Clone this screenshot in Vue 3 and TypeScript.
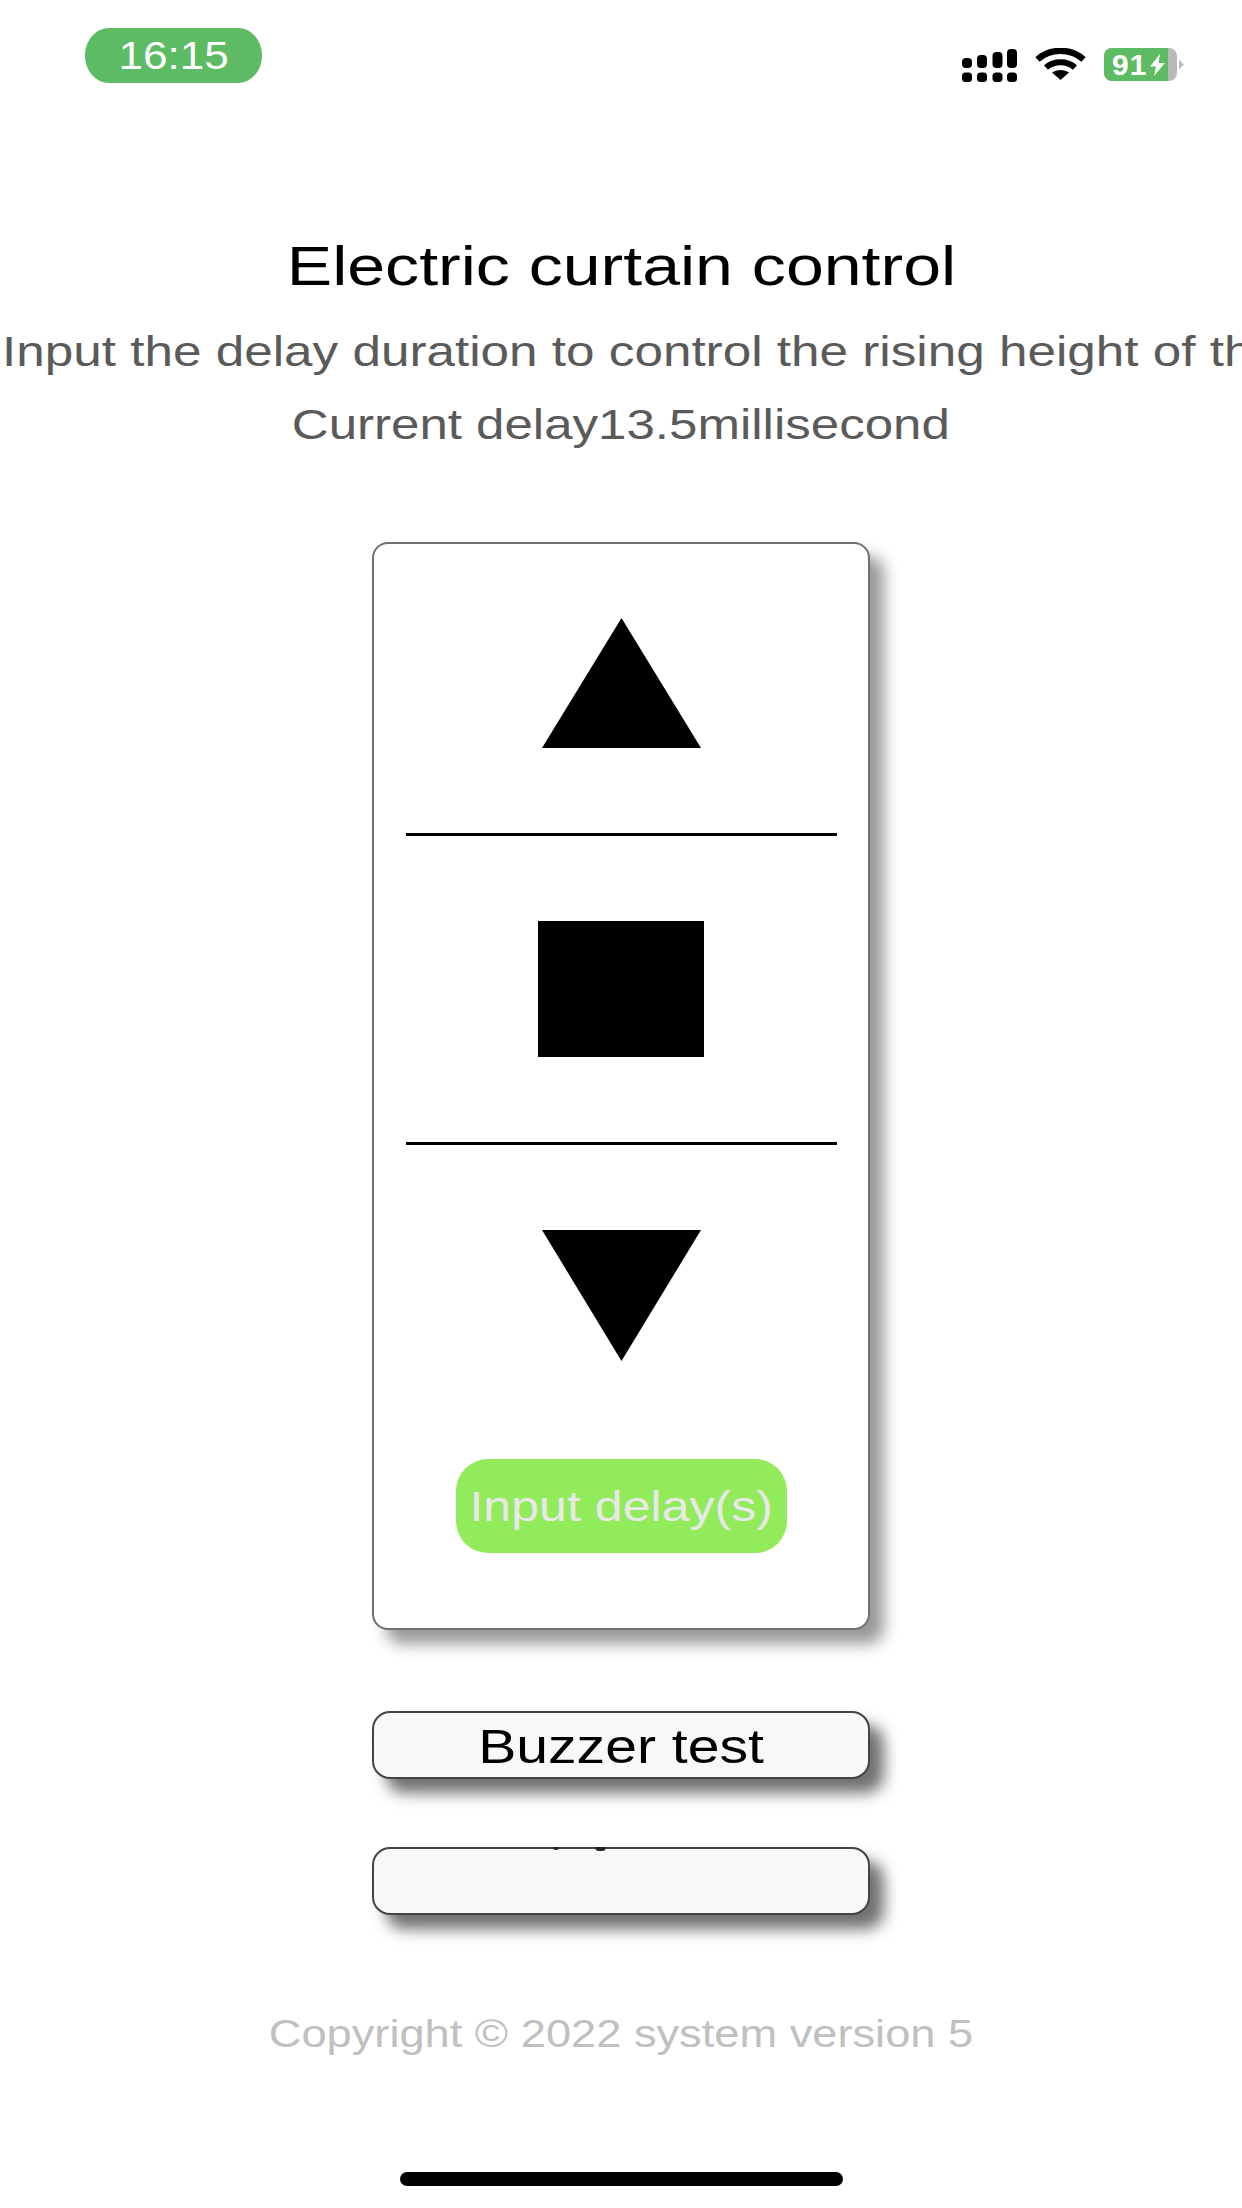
<script setup lang="ts">
const controls = [
  { name: 'up', kind: 'poly', points: '79.5,0 159,130 0,130', w: 159, h: 130 },
  { name: 'stop', kind: 'rect', points: '', w: 166, h: 136 },
  { name: 'down', kind: 'poly', points: '0,0 159,0 79.5,131', w: 159, h: 131 }
]
const signalBars = [
  { x: 0, y: 9, h: 10 },
  { x: 15, y: 6, h: 13 },
  { x: 30.5, y: 3, h: 16 },
  { x: 45, y: 0, h: 19 }
]
</script>

<template>
  <main class="page">
    <header class="status">
      <div class="time"><span class="stretch">16:15</span></div>
      <div class="icons">
        <svg class="signal" width="55" height="33" viewBox="0 0 55 33" aria-hidden="true">
          <rect v-for="b in signalBars" :key="b.x" :x="b.x" :y="b.y" width="10" :height="b.h" rx="4" fill="#000" />
          <rect v-for="b in signalBars" :key="'d' + b.x" :x="b.x" y="23.5" width="10" height="9.5" rx="3.5" fill="#000" />
        </svg>
        <svg class="wifi" width="51" height="32" viewBox="0 0 51 32" aria-hidden="true">
          <path d="M2.5 11.5 C15 0 36 0 48.5 11.5" fill="none" stroke="#000" stroke-width="6.4" />
          <path d="M11 19.5 C19 12.5 32 12.5 40 19.5" fill="none" stroke="#000" stroke-width="6" />
          <path d="M17 24.5 C22 21 29 21 34 24.5 L25.5 32 Z" fill="#000" />
        </svg>
        <div class="battery">
          <div class="cell">
            <div class="charge">
              <span class="percent">91</span>
              <svg class="bolt" width="17" height="22" viewBox="0 0 17 22" aria-hidden="true">
                <path d="M11 0 L1 12.5 H7 L5 22 L16 9 H9.5 Z" fill="#fff" />
              </svg>
            </div>
          </div>
          <span class="nub"></span>
        </div>
      </div>
    </header>

    <h1 class="title"><span class="stretch">Electric curtain control</span></h1>
    <div class="hint"><span class="stretch-left">Input the delay duration to control the rising height of the curtain</span></div>
    <p class="delay"><span class="stretch">Current delay13.5millisecond</span></p>

    <section class="card">
      <template v-for="(c, i) in controls" :key="c.name">
        <div class="control">
          <svg :width="c.w" :height="c.h" :viewBox="`0 0 ${c.w} ${c.h}`" :aria-label="c.name">
            <polygon v-if="c.kind === 'poly'" :points="c.points" fill="#000" />
            <rect v-else :width="c.w" :height="c.h" fill="#000" />
          </svg>
        </div>
        <hr v-if="i < controls.length - 1" class="rule" />
      </template>
      <button class="input-btn" type="button"><span class="stretch">Input delay(s)</span></button>
    </section>

    <button class="wide-btn buzzer" type="button"><span class="stretch">Buzzer test</span></button>
    <button class="wide-btn blank" type="button">
      <i class="mark mark-a"></i>
      <i class="mark mark-b"></i>
    </button>

    <footer class="copy"><span class="stretch">Copyright © 2022 system version 5</span></footer>
    <div class="home"></div>
  </main>
</template>

<style>
html, body { margin: 0; background: #fff; }
</style>

<style scoped>
.page {
  width: 1242px;
  height: 2208px;
  box-sizing: border-box;
  padding-top: 28px;
  display: flex;
  flex-direction: column;
  align-items: center;
  overflow: hidden;
  background: #fff;
  font-family: "Liberation Sans", Arial, sans-serif;
}
.stretch {
  display: inline-block;
  transform: scaleX(var(--sx));
  white-space: nowrap;
}
.stretch-left {
  display: inline-block;
  transform: scaleX(1.22);
  transform-origin: left center;
  white-space: nowrap;
}
.status {
  width: 1242px;
  height: 55px;
  padding: 0 58px 0 85px;
  box-sizing: border-box;
  display: flex;
  justify-content: space-between;
  align-items: flex-start;
}
.time {
  --sx: 1.16;
  width: 177px;
  height: 55px;
  border-radius: 24px / 27px;
  background: #5dbb63;
  color: #fff;
  font-size: 38px;
  line-height: 57px;
  text-align: center;
}
.icons {
  display: flex;
  align-items: flex-start;
  margin-top: 20px;
}
.signal { margin-top: 1px; }
.wifi { margin-left: 18px; }
.battery {
  margin-left: 18px;
  display: flex;
  align-items: center;
}
.cell {
  width: 73px;
  height: 33px;
  border-radius: 8px;
  background: #b9bbb9;
  overflow: hidden;
}
.charge {
  width: 64px;
  height: 33px;
  background: #5dbb63;
  display: flex;
  align-items: center;
  padding-left: 8px;
  box-sizing: border-box;
}
.percent {
  color: #fff;
  font-weight: 700;
  font-size: 30px;
  line-height: 33px;
  letter-spacing: 1px;
}
.bolt { flex: none; margin-left: 2px; }
.nub {
  margin-left: 2px;
  width: 5px;
  height: 10px;
  background: #bdbdbd;
  clip-path: polygon(0 0, 100% 50%, 0 100%);
}
.title {
  --sx: 1.215;
  margin: 153px 0 0;
  height: 60px;
  font-size: 56px;
  line-height: 60px;
  font-weight: 400;
  color: #000;
  text-align: center;
}
.hint {
  width: 1242px;
  height: 60px;
  margin-top: 26px;
  padding-left: 2px;
  box-sizing: border-box;
  overflow: hidden;
  font-size: 42px;
  line-height: 60px;
  color: #5a5a5a;
  white-space: nowrap;
}
.delay {
  --sx: 1.215;
  margin: 13px 0 0;
  height: 60px;
  font-size: 42px;
  line-height: 60px;
  color: #5a5a5a;
  text-align: center;
}
.card {
  width: 498px;
  height: 1088px;
  margin-top: 87px;
  box-sizing: border-box;
  border: 2px solid #707070;
  border-radius: 16px;
  box-shadow: 14px 14px 15px #999;
  background: #fff;
  display: flex;
  flex-direction: column;
  align-items: center;
  padding-top: 74px;
}
.control {
  display: flex;
  justify-content: center;
  line-height: 0;
}
.rule {
  width: 431px;
  height: 3px;
  margin: 85px 0 85px;
  border: 0;
  background: #000;
}
.input-btn {
  --sx: 1.193;
  margin-top: 98px;
  width: 331px;
  height: 94px;
  border: 0;
  border-radius: 32px;
  background: #92eb5b;
  color: #e8e8e8;
  font-family: inherit;
  font-size: 42px;
  padding: 2px 0 0;
}
.wide-btn {
  --sx: 1.19;
  position: relative;
  display: block;
  width: 498px;
  height: 68px;
  box-sizing: border-box;
  border: 2px solid #444;
  border-radius: 18px;
  background: #f8f8f8;
  box-shadow: 14px 14px 15px #707070;
  color: #000;
  font-family: inherit;
  font-size: 48px;
  line-height: 64px;
  padding: 2px 0 0;
}
.buzzer { margin-top: 81px; }
.blank { margin-top: 68px; }
.mark {
  position: absolute;
  top: -2px;
  height: 3px;
  background: #222;
  border-radius: 0 0 6px 6px;
}
.mark-a { left: 179px; width: 6px; }
.mark-b { left: 221px; width: 11px; height: 4px; }
.copy {
  --sx: 1.19;
  margin-top: 94px;
  height: 50px;
  font-size: 38px;
  line-height: 50px;
  color: #c0c0c0;
  text-align: center;
}
.home {
  width: 443px;
  height: 14px;
  margin-top: 113px;
  border-radius: 7px;
  background: #000;
}
</style>
